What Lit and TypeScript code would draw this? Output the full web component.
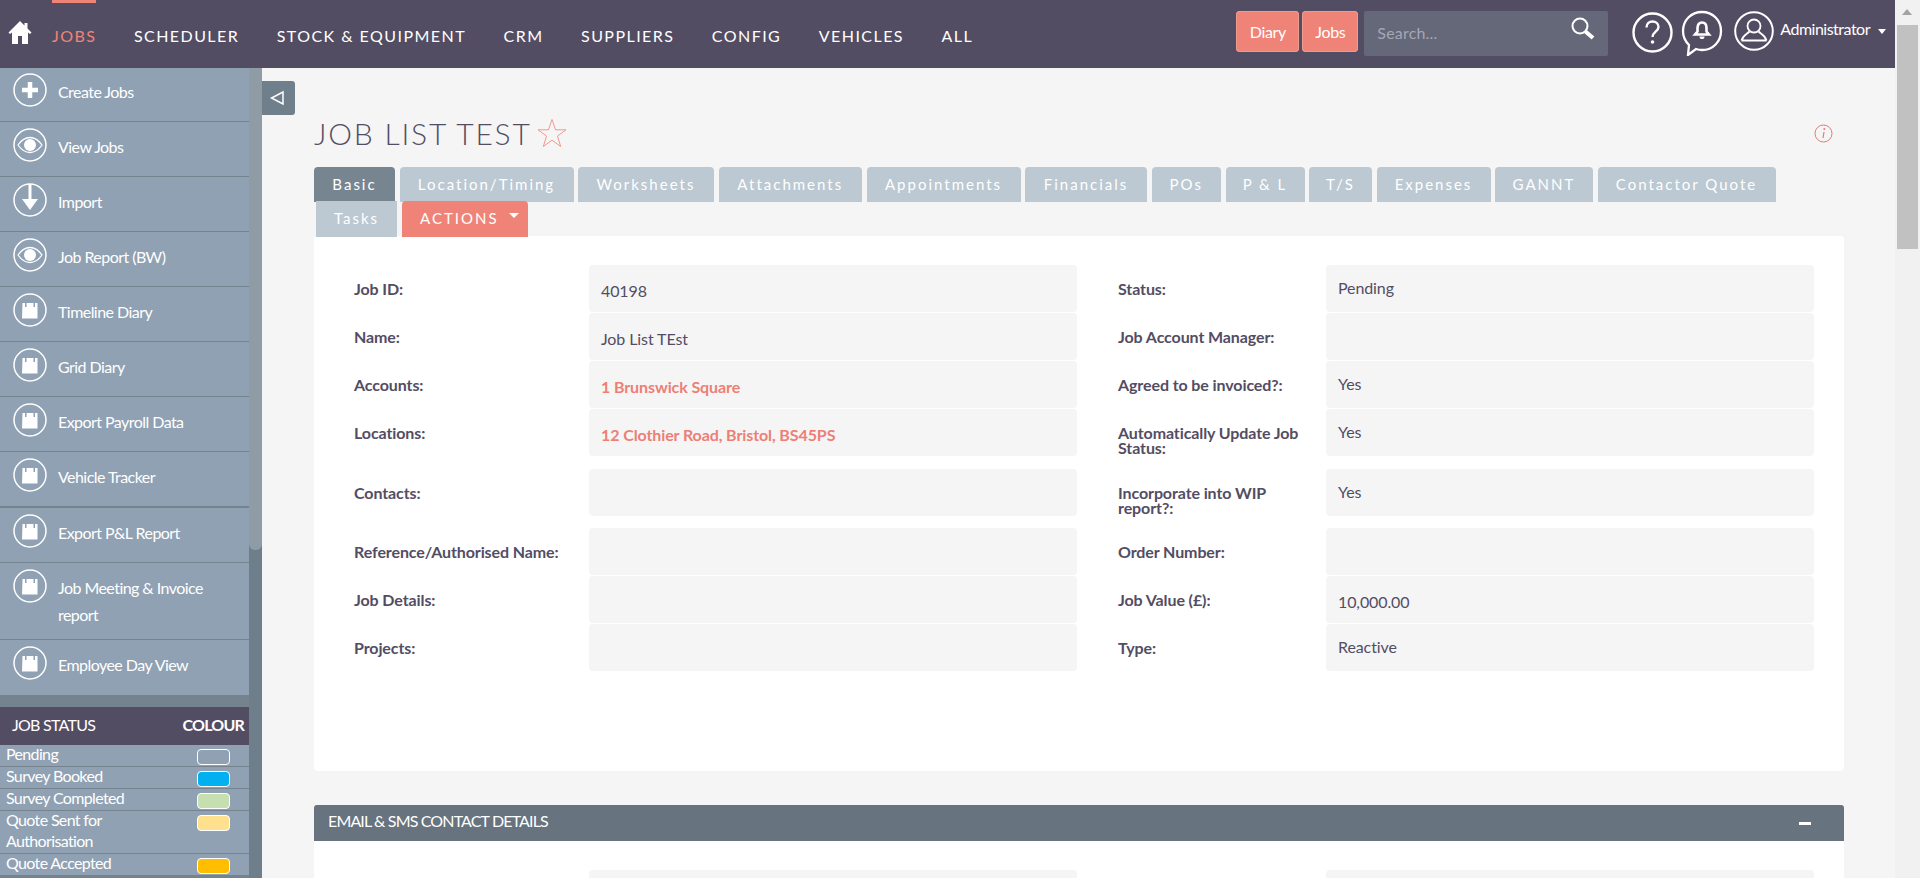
import { LitElement, html, css, svg } from "lit";
import { customElement } from "lit/decorators.js";

const ring = (inner: unknown) => html`<svg class="ico" viewBox="0 0 34 34" fill="none"><circle cx="17" cy="17" r="16" stroke="#fff" stroke-width="1.5"/>${inner}</svg>`;
const plus = svg`<path d="M17 9v16M9 17h16" stroke="#fff" stroke-width="4.5"/>`;
const eye = svg`<path d="M5 17c3.500-5 7.500-7.500 12-7.500S25.500 12 29 17c-3.500 5-7.500 7.500-12 7.500S8.500 22 5 17z" stroke="#fff" stroke-width="1.300"/><circle cx="17" cy="17" r="6" fill="#fff"/>`;
const down = svg`<path d="M17 1v17" stroke="#fff" stroke-width="3"/><path d="M9 16h16l-8 11z" fill="#fff"/>`;
const cal = svg`<path d="M9.500 10h2.500v4h1.500v-4h7v4h1.500v-4h2.500v15.500h-15.500z" fill="#fff"/>`;

const menu = [
  ["Create Jobs", plus], ["View Jobs", eye], ["Import", down], ["Job Report (BW)", eye],
  ["Timeline Diary", cal], ["Grid Diary", cal], ["Export Payroll Data", cal], ["Vehicle Tracker", cal],
  ["Export P&L Report", cal], ["Job Meeting & Invoice report", cal], ["Employee Day View", cal],
] as const;

const statuses = [
  ["Pending", "transparent"], ["Survey Booked", "#00b0f0"], ["Survey Completed", "#c5dfb0"],
  ["Quote Sent for Authorisation", "#ffe08f"], ["Quote Accepted", "#ffbf00"],
];

const nav = ["SCHEDULER", "STOCK & EQUIPMENT", "CRM", "SUPPLIERS", "CONFIG", "VEHICLES", "ALL"];
const tabs: [string, number][] = [["Location/Timing", 174], ["Worksheets", 136], ["Attachments", 143.5], ["Appointments", 154], ["Financials", 122], ["POs", 69.5], ["P & L", 79], ["T/S", 63], ["Expenses", 114], ["GANNT", 98], ["Contactor Quote", 178]];

type F = { l: string; v?: string; low?: boolean; link?: boolean };
const rows: { a: F; b: F; sep?: string }[] = [
  { a: { l: "Job ID:", v: "40198", low: true }, b: { l: "Status:", v: "Pending" } },
  { a: { l: "Name:", v: "Job List TEst", low: true }, b: { l: "Job Account Manager:" } },
  { a: { l: "Accounts:", v: "1 Brunswick Square", low: true, link: true }, b: { l: "Agreed to be invoiced?:", v: "Yes" } },
  { a: { l: "Locations:", v: "12 Clothier Road, Bristol, BS45PS", low: true, link: true }, b: { l: "Automatically Update Job Status:", v: "Yes" }, sep: "sep wide" },
  { a: { l: "Contacts:" }, b: { l: "Incorporate into WIP report?:", v: "Yes" }, sep: "sep" },
  { a: { l: "Reference/Authorised Name:" }, b: { l: "Order Number:" } },
  { a: { l: "Job Details:" }, b: { l: "Job Value (£):", v: "10,000.00", low: true } },
  { a: { l: "Projects:" }, b: { l: "Type:", v: "Reactive" } },
];

@customElement("app-root")
export class AppRoot extends LitElement {
  static styles = css`
    :host { display: flex; width: 1920px; height: 878px; overflow: hidden; font-family: Lato, "Open Sans", sans-serif; color: #534d64; background: #f5f5f5; }
    * { box-sizing: border-box; }
    .page { width: 1895px; height: 878px; display: flex; flex-direction: column; position: relative; }
    .scroll { width: 25px; height: 878px; background: #f1f1f1; padding: 25px 2px 0; position: relative; }
    .scroll .thumb { height: 224px; background: #c1c1c1; }
    .scroll .up { position: absolute; left: 7px; top: 9px; border: 5.500px solid transparent; border-top: 0; border-bottom: 6px solid #a3a3a3; }

    .top { height: 68px; flex: none; background: #534d64; display: flex; align-items: flex-start; position: relative; z-index: 2; color: #fff; }
    .home { width: 24px; height: 24px; margin: 20px 0 0 8px; flex: none; }
    .nav { display: flex; gap: 37.500px; margin-left: 20px; }
    .nav a { font-size: 16px; letter-spacing: 1.450px; line-height: 20px; padding: 26px 0 0; white-space: nowrap; }
    .nav a.on { color: #f08377; box-shadow: inset 0 3px 0 #f08377; }
    .actions { margin-left: auto; display: flex; align-items: flex-start; }
    .qbtn { height: 41px; margin-top: 11px; margin-right: 3px; background: #f08377; border-radius: 4px; font-size: 16px; line-height: 41px; letter-spacing: -0.35px; text-align: center; box-shadow: inset 0 0 0 1px #ee9b90; }
    .qbtn.d { width: 63px; }
    .qbtn.j { width: 56px; }
    .search { width: 244px; height: 45px; margin: 11px 0 0 3px; background: #646879; border-radius: 2px; display: flex; align-items: center; justify-content: space-between; padding: 0 13px 3px 13px; font-size: 16px; color: #a5a7b3; letter-spacing: .2px; }
    .search svg { width: 25px; height: 25px; margin-top: -7px; }
    .help { width: 41px; height: 41px; margin: 12px 0 0 24px; }
    .bell { width: 42px; height: 46px; margin: 10px 0 0 8px; }
    .user { width: 40px; height: 40px; margin: 11px 0 0 11px; }
    .admin { font-size: 16px; line-height: 20px; margin: 19px 9px 0 6px; letter-spacing: -0.5px; display: flex; align-items: center; gap: 8px; }
    .admin i { border: 4.500px solid transparent; border-top: 5px solid #fff; border-bottom: 0; margin-top: 5px; }

    .body { flex: 1; display: flex; min-height: 0; }
    .side { width: 249px; flex: none; background: #75838f; display: flex; flex-direction: column; color: #fff; overflow: hidden; }
    .menu { margin-top: -1px; background: #8fa1b3; }
    .item { display: flex; gap: 11px; padding: 6px 0 0 13px; height: 55px; border-bottom: 1px solid #75838f; font-size: 16px; letter-spacing: -0.55px; line-height: 27px; }
    .item.thick { height: 56px; border-bottom-width: 2px; }
    .item.tall { height: 77px; }
    .item.last { border-bottom: 0; }
    .item span { padding-top: 4.500px; max-width: 170px; }
    .ico { width: 34px; height: 34px; flex: none; }
    .sbar { width: 13px; flex: none; background: #6f7e8b; }
    .sbar div { height: 482px; background: #8f9ba5; border-radius: 0 0 6px 6px; }
    .sthead { margin-top: 12px; height: 38px; background: #534d64; display: flex; align-items: center; justify-content: space-between; padding: 0 5px 3px 12px; font-size: 16px; letter-spacing: -0.75px; }
    .sthead b { font-weight: 700; letter-spacing: -0.8px; }
    .strow { background: #8fa1b3; border-bottom: 1px solid #75838f; display: grid; grid-template-columns: 150px 33px; column-gap: 41px; padding: 0 0 0 6px; font-size: 16px; line-height: 21px; letter-spacing: -0.65px; min-height: 22px; }
    .strow span { margin: -2px 0 2px; }
    .swatch { width: 33px; height: 16px; border: 1px solid #fff; border-radius: 4px; margin-top: 4px; }

    .main { flex: 1; min-width: 0; padding: 0 51px 0 52px; position: relative; overflow: hidden; }
    .toggle { position: absolute; left: 0; top: 13px; width: 33px; height: 34px; background: #6f7f8c; border-radius: 0 3px 3px 0; display: flex; align-items: center; justify-content: center; }
    .toggle svg { width: 18px; height: 18px; margin-left: -4px; }
    .head { display: flex; align-items: center; height: 50px; margin: 40px 0 9px; }
    h1 { margin: 0; font-weight: 300; font-size: 30px; letter-spacing: 1.800px; color: #534d64; white-space: nowrap; line-height: 36px; }
    .star { width: 30px; height: 30px; margin-left: 5px; opacity: .8; }
    .info { width: 19px; height: 19px; margin-left: auto; margin-right: 11px; }
    .tabs { display: flex; flex-wrap: wrap; gap: 0 4.500px; }
    .tabs a { height: 35px; line-height: 35px; text-align: center; background: #bcc8d2; color: #fff; font-size: 15px; letter-spacing: 2px; border-radius: 4px 4px 0 0; white-space: nowrap; }
    .tabs a.on { background: #778591; width: 81px; }
    .row2 { display: flex; margin: -1px 0 0 2px; gap: 5px; }
    .row2 a { height: 36px; line-height: 35px; width: 81px; text-align: center; background: #bcc8d2; color: #fff; font-size: 15px; letter-spacing: 2px; }
    .row2 a.act { background: #f08377; width: 126px; border-radius: 4px 4px 0 0; padding: 0 0 2px 18px; display: flex; align-items: center; gap: 10px; }
    .row2 a.act i { border: 5px solid transparent; border-top: 5.500px solid #fff; border-bottom: 0; margin-top: -6px; }
    .card { margin-top: -1px; background: #fff; height: 535px; border-radius: 4px; padding: 29px 30px 0 40px; }
    .row { display: grid; grid-template-columns: 235px 488px 41px 208px 488px; margin-bottom: 1px; min-height: 47px; }
    .row.sep { margin-bottom: 12px; }
    .row.wide { margin-bottom: 13px; }
    .lab { font-size: 16px; font-weight: 700; line-height: 15px; color: #534d64; letter-spacing: -0.1px; padding: 16px 8px 0 0; }
    .val { background: #f5f5f5; border-radius: 4px; font-size: 16px; letter-spacing: -0.1px; color: #534d64; padding: 0 12px 2px; display: flex; align-items: center; }
    .val.low { padding-top: 6px; }
    .val.link { color: #ed7f75; font-weight: 700; }
    .col2 { grid-column: 4; }
    .bar { margin-top: 34px; height: 36px; background: #67737e; border-radius: 3px 3px 0 0; color: #fff; display: flex; align-items: center; justify-content: space-between; padding: 0 33px 0 14px; font-size: 16px; letter-spacing: -0.86px; }
    .bar span { margin-bottom: 6px; }
    .bar i { width: 12px; height: 3px; background: #fff; }
    .card2 { height: 60px; background: #fff; padding: 29px 30px 0 40px; }
  `;

  private field(f: F, second: boolean) {
    const cls = `val${f.low ? " low" : ""}${f.link ? " link" : ""}`;
    return html`<div class="lab ${second ? "col2" : ""}">${f.l}</div><div class=${cls}>${f.v ?? ""}</div>`;
  }

  render() {
    return html`
      <div class="page">
        <header class="top">
          <svg class="home" viewBox="0 0 24 24" fill="#fff"><path d="M12 1 0.500 12.500 2 14l2-1.500V24h6v-8h4v8h6V12.500L22 14l1.500-1.500L19.500 8.500V3h-3v2.500z"/></svg>
          <nav class="nav"><a class="on">JOBS</a>${nav.map((n) => html`<a>${n}</a>`)}</nav>
          <div class="actions">
            <div class="qbtn d">Diary</div><div class="qbtn j">Jobs</div>
            <div class="search">Search...
              <svg viewBox="0 0 25 25" fill="none"><circle cx="10" cy="10" r="7.500" stroke="#fff" stroke-width="2"/><path d="M15.500 15.500 23 22" stroke="#fff" stroke-width="4"/></svg>
            </div>
            <svg class="help" viewBox="0 0 41 41" fill="none"><circle cx="20.500" cy="20.500" r="19" stroke="#fff" stroke-width="2.400"/><path d="M14.500 15.500c0-4 3-6 6-6s6 2 6 5.500c0 4.500-6 5-6 10" stroke="#fff" stroke-width="2.400"/><circle cx="20.500" cy="30" r="1.800" fill="#fff"/></svg>
            <svg class="bell" viewBox="0 0 42 46" fill="none"><path d="M21 2c11 0 19 8.500 19 19s-8 19-19 19c-2 0-4-.3-6-1l-8 6 1-10C4 31 2 26 2 21 2 10.500 10 2 21 2z" stroke="#fff" stroke-width="2.300"/><path d="M21 12.500c3 0 4.500 2.500 4.500 5.500v3.500l2.500 3H14l2.500-3V18c0-3 1.500-5.500 4.500-5.500z" stroke="#fff" stroke-width="2.600"/><path d="M18.500 26.500h5c0 2-1 2.500-2.500 2.500s-2.500-.5-2.500-2.500z" fill="#fff"/></svg>
            <svg class="user" viewBox="0 0 40 40" fill="none"><circle cx="20" cy="20" r="18.800" stroke="#fff" stroke-width="2"/><circle cx="20" cy="15" r="6.500" stroke="#fff" stroke-width="1.800"/><path d="M7.500 29.500 C9 24 13 23 15.500 20.500M32.500 29.500C31 24 27 23 24.500 20.500M7.500 29.500h25" stroke="#fff" stroke-width="1.800"/></svg>
            <div class="admin">Administrator<i></i></div>
          </div>
        </header>
        <div class="body">
          <aside class="side">
            <div class="menu">
              ${menu.map(([t, ic], i) => html`<div class="item ${i === 7 ? "thick" : ""} ${i === 9 ? "tall" : ""} ${i === 10 ? "last" : ""}">${ring(ic)}<span>${t}</span></div>`)}
            </div>
            <div class="sthead"><span>JOB STATUS</span><b>COLOUR</b></div>
            ${statuses.map(([n, c]) => html`<div class="strow"><span>${n}</span><div class="swatch" style="background:${c}"></div></div>`)}
          </aside>
          <div class="sbar"><div></div></div>
          <main class="main">
            <div class="toggle"><svg viewBox="0 0 18 18" fill="none"><path d="M15 3v12L3.500 9z" stroke="#fff" stroke-width="1.500"/></svg></div>
            <div class="head">
              <h1>JOB LIST TEST</h1>
              <svg class="star" viewBox="0 0 30 30" fill="none"><path d="M15 1.500l3.500 10.300h10.500l-8.500 6.300 3.200 10.400-8.700-6.300-8.700 6.300 3.200-10.400-8.500-6.300h10.500z" stroke="#f08377" stroke-width="1"/></svg>
              <svg class="info" viewBox="0 0 19 19" fill="none"><circle cx="9.500" cy="9.500" r="8.500" stroke="#e07b74" stroke-width="1"/><path d="M10 8 9 14" stroke="#e07b74" stroke-width="1.200"/><circle cx="10.300" cy="5" r="1" fill="#e07b74"/></svg>
            </div>
            <div class="tabs"><a class="on">Basic</a>${tabs.map(([t, w]) => html`<a style="width:${w}px">${t}</a>`)}</div>
            <div class="row2"><a>Tasks</a><a class="act">ACTIONS<i></i></a></div>
            <section class="card">
              ${rows.map((r) => html`<div class="row ${r.sep ?? ""}">${this.field(r.a, false)}${this.field(r.b, true)}</div>`)}
            </section>
            <div class="bar"><span>EMAIL &amp; SMS CONTACT DETAILS</span><i></i></div>
            <section class="card2"><div class="row"><div class="lab"></div><div class="val"></div><div class="lab col2"></div><div class="val"></div></div></section>
          </main>
        </div>
      </div>
      <div class="scroll"><div class="up"></div><div class="thumb"></div></div>
    `;
  }
}
